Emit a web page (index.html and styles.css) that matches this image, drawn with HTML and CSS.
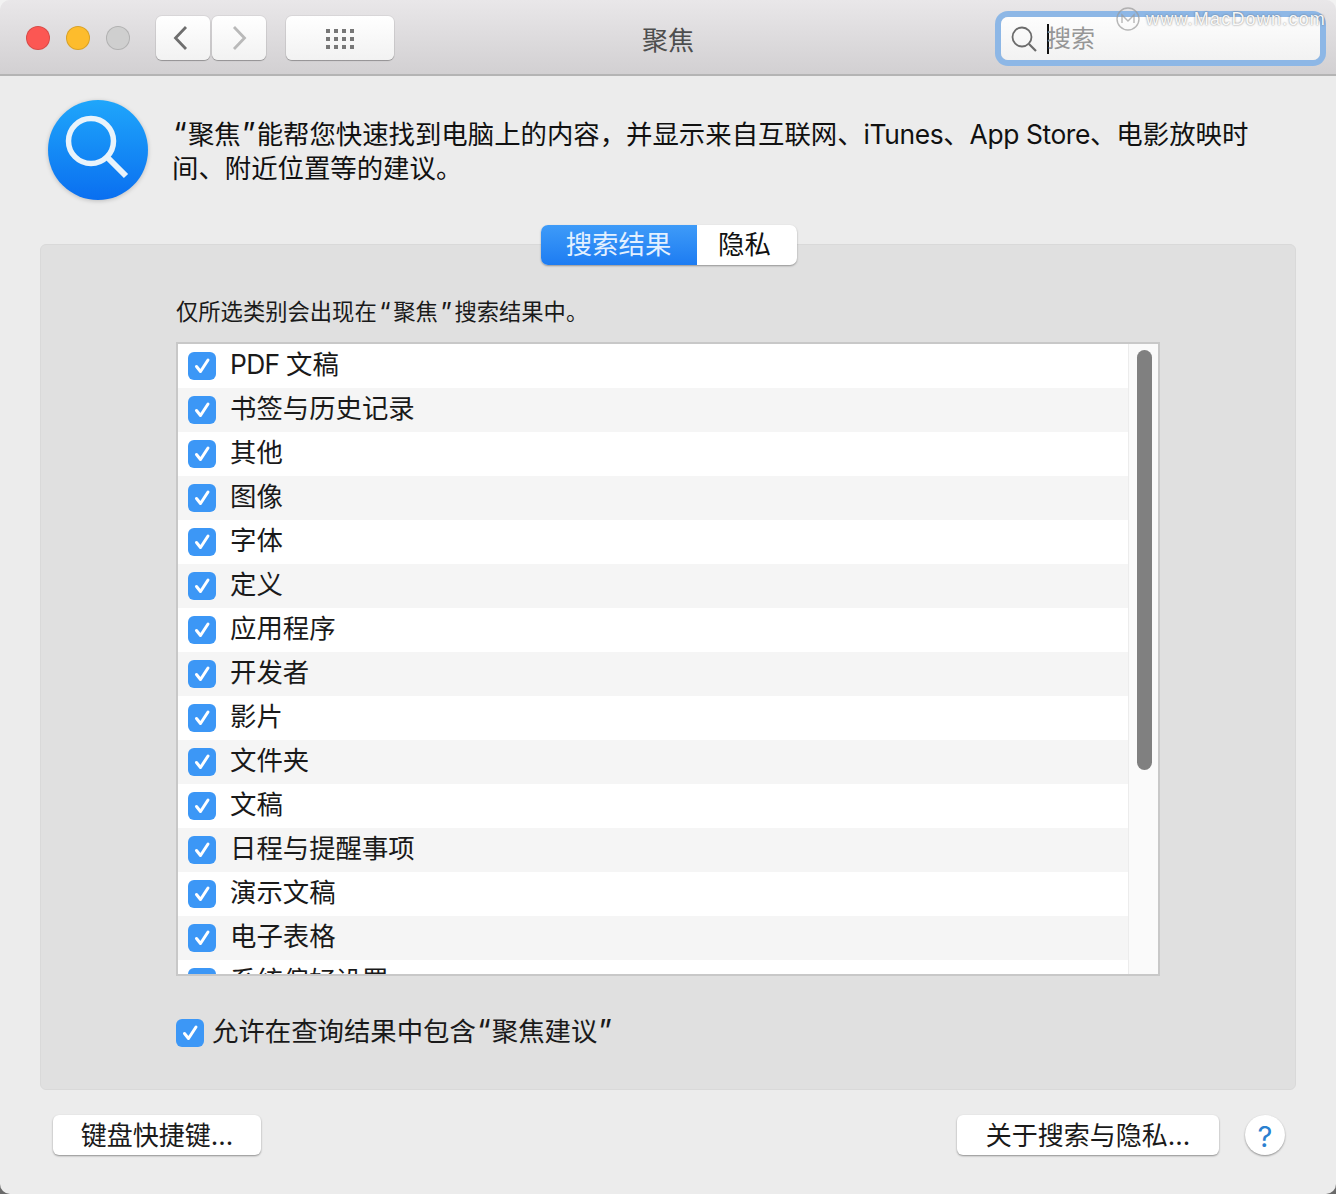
FILE: index.html
```html
<!DOCTYPE html>
<html lang="zh-CN">
<head>
<meta charset="utf-8">
<title>聚焦</title>
<link rel="stylesheet" href="styles.css">
</head>
<body>
<svg class="defs" width="0" height="0" aria-hidden="true">
  <symbol id="check" viewBox="0 0 28 28"><path d="M8.500 14.500l4 5L20 8" fill="none" stroke="#fff" stroke-width="3" stroke-linecap="round" stroke-linejoin="round"/></symbol>
</svg>
<div class="window">
  <header class="titlebar">
    <div class="lights">
      <span class="light red"></span><span class="light yellow"></span><span class="light gray"></span>
    </div>
    <div class="nav">
      <button class="tool nav-btn"><svg class="chev-back" width="18" height="26" viewBox="0 0 18 26"><path d="M14 2L3.500 13 14 24" fill="none" stroke="#6e6e6e" stroke-width="2.800"/></svg></button>
      <button class="tool nav-btn"><svg width="18" height="26" viewBox="0 0 18 26"><path d="M4 2l10.500 11L4 24" fill="none" stroke="#b9b9b9" stroke-width="2.800"/></svg></button>
    </div>
    <button class="tool grid-btn"><svg width="28" height="20" viewBox="0 0 28 20" fill="#777"><rect x="0" y="0" width="4" height="4"/><rect x="8" y="0" width="4" height="4"/><rect x="16" y="0" width="4" height="4"/><rect x="24" y="0" width="4" height="4"/><rect x="0" y="8" width="4" height="4"/><rect x="8" y="8" width="4" height="4"/><rect x="16" y="8" width="4" height="4"/><rect x="24" y="8" width="4" height="4"/><rect x="0" y="16" width="4" height="4"/><rect x="8" y="16" width="4" height="4"/><rect x="16" y="16" width="4" height="4"/><rect x="24" y="16" width="4" height="4"/></svg></button>
    <h1 class="title">聚焦</h1>
    <div class="search">
      <svg class="search-icon" width="26" height="26" viewBox="0 0 26 26"><circle cx="11" cy="11" r="9.500" fill="none" stroke="#6b6b6b" stroke-width="1.800"/><path d="M18 18l7 7" stroke="#6b6b6b" stroke-width="2.200"/></svg>
      <span class="caret"></span>
      <span class="placeholder">搜索</span>
    </div>
    <div class="watermark">
      <svg width="24" height="24" viewBox="0 0 24 24"><circle cx="12" cy="12" r="11" fill="none" stroke="#9a9a9a" stroke-width="1.400" opacity=".7"/><path d="M6 16V8l6 6 6-6v8" fill="none" stroke="#9a9a9a" stroke-width="1.400" opacity=".7"/></svg>
      <span>www.MacDown.com</span>
    </div>
  </header>

  <main class="content">
    <section class="intro">
      <svg class="spotlight" width="100" height="100" viewBox="0 0 100 100">
        <defs><linearGradient id="blue" x1="0" y1="0" x2="0" y2="1"><stop offset="0" stop-color="#1fa6fb"/><stop offset="1" stop-color="#0a6ff0"/></linearGradient></defs>
        <circle cx="50" cy="50" r="50" fill="url(#blue)"/>
        <circle cx="43" cy="41" r="22.500" fill="none" stroke="#e9f3fb" stroke-width="5.500"/>
        <path d="M60 58l18 18" stroke="#e9f3fb" stroke-width="6"/>
      </svg>
      <p class="intro-text"><span class="q">“</span>聚焦<span class="q">”</span>能帮您快速找到电脑上的内容，并显示来自互联网、<span class="latin">iTunes</span>、<span class="latin">App Store</span>、电影放映时<br>间、附近位置等的建议。</p>
    </section>

    <div class="tabs">
      <span class="tab active"><span>搜索结果</span></span>
      <span class="tab"><span>隐私</span></span>
    </div>

    <section class="panel">
      <p class="panel-note">仅所选类别会出现在<span class="q">“</span>聚焦<span class="q">”</span>搜索结果中。</p>
      <div class="list">
        <ul class="rows">
          <li class="row"><span class="check"><svg width="28" height="28"><use href="#check"/></svg></span><span class="label"><span class="pdf">PDF </span>文稿</span></li>
          <li class="row"><span class="check"><svg width="28" height="28"><use href="#check"/></svg></span><span class="label">书签与历史记录</span></li>
          <li class="row"><span class="check"><svg width="28" height="28"><use href="#check"/></svg></span><span class="label">其他</span></li>
          <li class="row"><span class="check"><svg width="28" height="28"><use href="#check"/></svg></span><span class="label">图像</span></li>
          <li class="row"><span class="check"><svg width="28" height="28"><use href="#check"/></svg></span><span class="label">字体</span></li>
          <li class="row"><span class="check"><svg width="28" height="28"><use href="#check"/></svg></span><span class="label">定义</span></li>
          <li class="row"><span class="check"><svg width="28" height="28"><use href="#check"/></svg></span><span class="label">应用程序</span></li>
          <li class="row"><span class="check"><svg width="28" height="28"><use href="#check"/></svg></span><span class="label">开发者</span></li>
          <li class="row"><span class="check"><svg width="28" height="28"><use href="#check"/></svg></span><span class="label">影片</span></li>
          <li class="row"><span class="check"><svg width="28" height="28"><use href="#check"/></svg></span><span class="label">文件夹</span></li>
          <li class="row"><span class="check"><svg width="28" height="28"><use href="#check"/></svg></span><span class="label">文稿</span></li>
          <li class="row"><span class="check"><svg width="28" height="28"><use href="#check"/></svg></span><span class="label">日程与提醒事项</span></li>
          <li class="row"><span class="check"><svg width="28" height="28"><use href="#check"/></svg></span><span class="label">演示文稿</span></li>
          <li class="row"><span class="check"><svg width="28" height="28"><use href="#check"/></svg></span><span class="label">电子表格</span></li>
          <li class="row"><span class="check"><svg width="28" height="28"><use href="#check"/></svg></span><span class="label">系统偏好设置</span></li>
        </ul>
        <div class="scrollbar"><div class="thumb"></div></div>
      </div>
      <label class="allow"><span class="check"><svg width="28" height="28"><use href="#check"/></svg></span><span class="allow-text">允许在查询结果中包含<span class="q">“</span>聚焦建议<span class="q">”</span></span></label>
    </section>

    <footer class="footer">
      <button class="btn btn-keys"><span>键盘快捷键...</span></button>
      <button class="btn btn-about"><span>关于搜索与隐私...</span></button>
      <button class="help">?</button>
    </footer>
  </main>
</div>
</body>
</html>
```
FILE: styles.css
```css
* { box-sizing: border-box; }
html, body { margin: 0; height: 100%; }
body {
  font-family: "Inter", "Noto Sans CJK SC", "Liberation Sans", sans-serif;
  font-size: 26.4px;
  color: #1a1a1a;
  background: linear-gradient(#f2f2f2 50%, #6a6a6a 50%);
  overflow: hidden;
}
.defs { position: absolute; }
button { font: inherit; color: inherit; padding: 0; cursor: default; }
.q { font-size: 1.16em; line-height: 0; vertical-align: -.03em; padding: 0 .04em; }
.latin { letter-spacing: -.4px; }
.pdf { letter-spacing: -.7px; }

.window { height: 1194px; display: flex; flex-direction: column; background: #ececec; border-radius: 10px; overflow: hidden; }

.titlebar {
  position: relative;
  flex: none;
  height: 76px;
  display: flex;
  align-items: flex-start;
  padding-top: 16px;
  padding-left: 26px;
  background: linear-gradient(#e9e7e9, #d2d0d2);
  border-bottom: 2px solid #b4b4b4;
}
.lights { display: flex; gap: 16px; margin-top: 10px; }
.light { width: 24px; height: 24px; border-radius: 50%; border: 1px solid rgba(0,0,0,.14); }
.red { background: #fc5753; }
.yellow { background: #fdbc2c; }
.gray { background: #cfcfcf; }

.tool {
  height: 44px;
  border: 0;
  border-radius: 6px;
  background: linear-gradient(#ffffff, #f2f2f2);
  box-shadow: 0 1px 1px rgba(0,0,0,.28), 0 0 0 1px rgba(0,0,0,.05);
  display: flex;
  align-items: center;
  justify-content: center;
}
.nav { display: flex; gap: 2px; margin-left: 26px; }
.nav-btn { width: 54px; }
.chev-back { margin-right: 2px; margin-left: -2px; }
.grid-btn { width: 108px; margin-left: 20px; }
.grid-btn svg { margin-top: 2px; }

.title {
  position: absolute;
  left: 0; right: 0; top: 23px;
  margin: 0;
  text-align: center;
  font-size: 26px;
  line-height: 36px;
  font-weight: 400;
  color: #4e4e4e;
}

.search {
  position: absolute;
  left: 1001px; top: 17px;
  width: 319px; height: 43px;
  border-radius: 7px;
  background: linear-gradient(#fdfdfd, #f2f2f2);
  box-shadow: 0 0 0 6px #8db7e6;
  display: flex;
  align-items: center;
  padding-left: 10px;
}
.search-icon { margin-top: 1px; flex: none; }
.caret { width: 2px; height: 30px; background: #111; margin-left: 10px; flex: none; }
.placeholder { font-size: 24px; color: #969696; margin-left: -2px; margin-bottom: 4px; }

.watermark {
  position: absolute;
  left: 1116px; top: 7px;
  display: flex;
  align-items: center;
  gap: 6px;
  color: rgba(255,255,255,.95);
  font-family: "Liberation Sans", sans-serif;
  font-size: 18px;
  letter-spacing: 1.2px;
  white-space: nowrap;
  text-shadow: 0 0 2px rgba(90,90,90,.85);
}

.content { flex: 1; display: flex; flex-direction: column; padding: 24px 40px 0; }

.intro { display: flex; align-items: flex-start; padding-left: 8px; height: 125px; }
.spotlight { flex: none; filter: drop-shadow(0 1px 2px rgba(0,0,0,.2)); }
.intro-text { margin: 17px 0 0 24px; line-height: 34px; color: #111; white-space: nowrap; }

.tabs {
  align-self: center;
  display: flex;
  position: relative;
  z-index: 1;
  height: 40px;
  margin-bottom: -21px;
  border-radius: 7px;
  background: #fff;
  box-shadow: 0 1px 2px rgba(0,0,0,.35);
  overflow: hidden;
  margin-left: 1px;
}
.tab { display: flex; align-items: center; justify-content: center; width: 100px; color: #111; }
.tab > span { margin-bottom: 6px; margin-right: 4px; }
.tab.active { width: 156px; color: #e3f0ff; background: linear-gradient(#3e9bf8, #1d7cf2); }
.tab.active > span { margin-right: 0; }

.panel {
  height: 846px;
  border: 1px solid #d9d9d9;
  border-radius: 6px;
  background: #e0e0e0;
  padding: 50px 0 0 135px;
}
.panel-note { margin: 0; font-size: 22.300px; line-height: 34px; color: #1a1a1a; }
.panel-note .q { padding: 0 .1em; }

.list {
  width: 984px;
  height: 634px;
  margin-top: 13px;
  border: 2px solid #c8c8c8;
  background: #fff;
  display: flex;
  overflow: hidden;
}
.rows { flex: 1; list-style: none; margin: 0; padding: 0; overflow: hidden; }
.row { height: 44px; display: flex; align-items: center; padding-left: 10px; }
.row:nth-child(even) { background: #f5f5f5; }
.row .check { margin-right: 14px; }
.label { margin-bottom: 7px; }

.check {
  width: 28px; height: 28px;
  flex: none;
  border-radius: 6px;
  background: #3c97f6;
  display: block;
}
.check svg { display: block; }

.scrollbar { width: 30px; flex: none; background: #fafafa; border-left: 1px solid #ececec; padding: 6px 0 0 8px; }
.thumb { width: 15px; height: 420px; border-radius: 8px; background: #808080; }

.allow { display: flex; align-items: center; gap: 8px; margin-top: 40px; line-height: 30px; }
.allow-text { margin-bottom: 3px; }

.footer { position: relative; display: flex; align-items: center; height: 40px; margin-top: 25px; padding-left: 13px; }
.btn {
  height: 40px;
  border: 0;
  border-radius: 6px;
  background: #fff;
  box-shadow: 0 1px 2px rgba(0,0,0,.4);
  color: #1a1a1a;
  font-size: 26px;
}
.btn > span { display: block; margin-bottom: 8px; }
.btn-keys { width: 208px; }
.btn-about { width: 262px; margin-left: auto; }
.help {
  width: 40px; height: 40px;
  margin-left: 26px; margin-right: 11px;
  border: 0;
  border-radius: 50%;
  background: #fff;
  box-shadow: 0 1px 2px rgba(0,0,0,.4);
  color: #2a80d0;
  font-size: 29px;
  padding-top: 3px;
}
```
